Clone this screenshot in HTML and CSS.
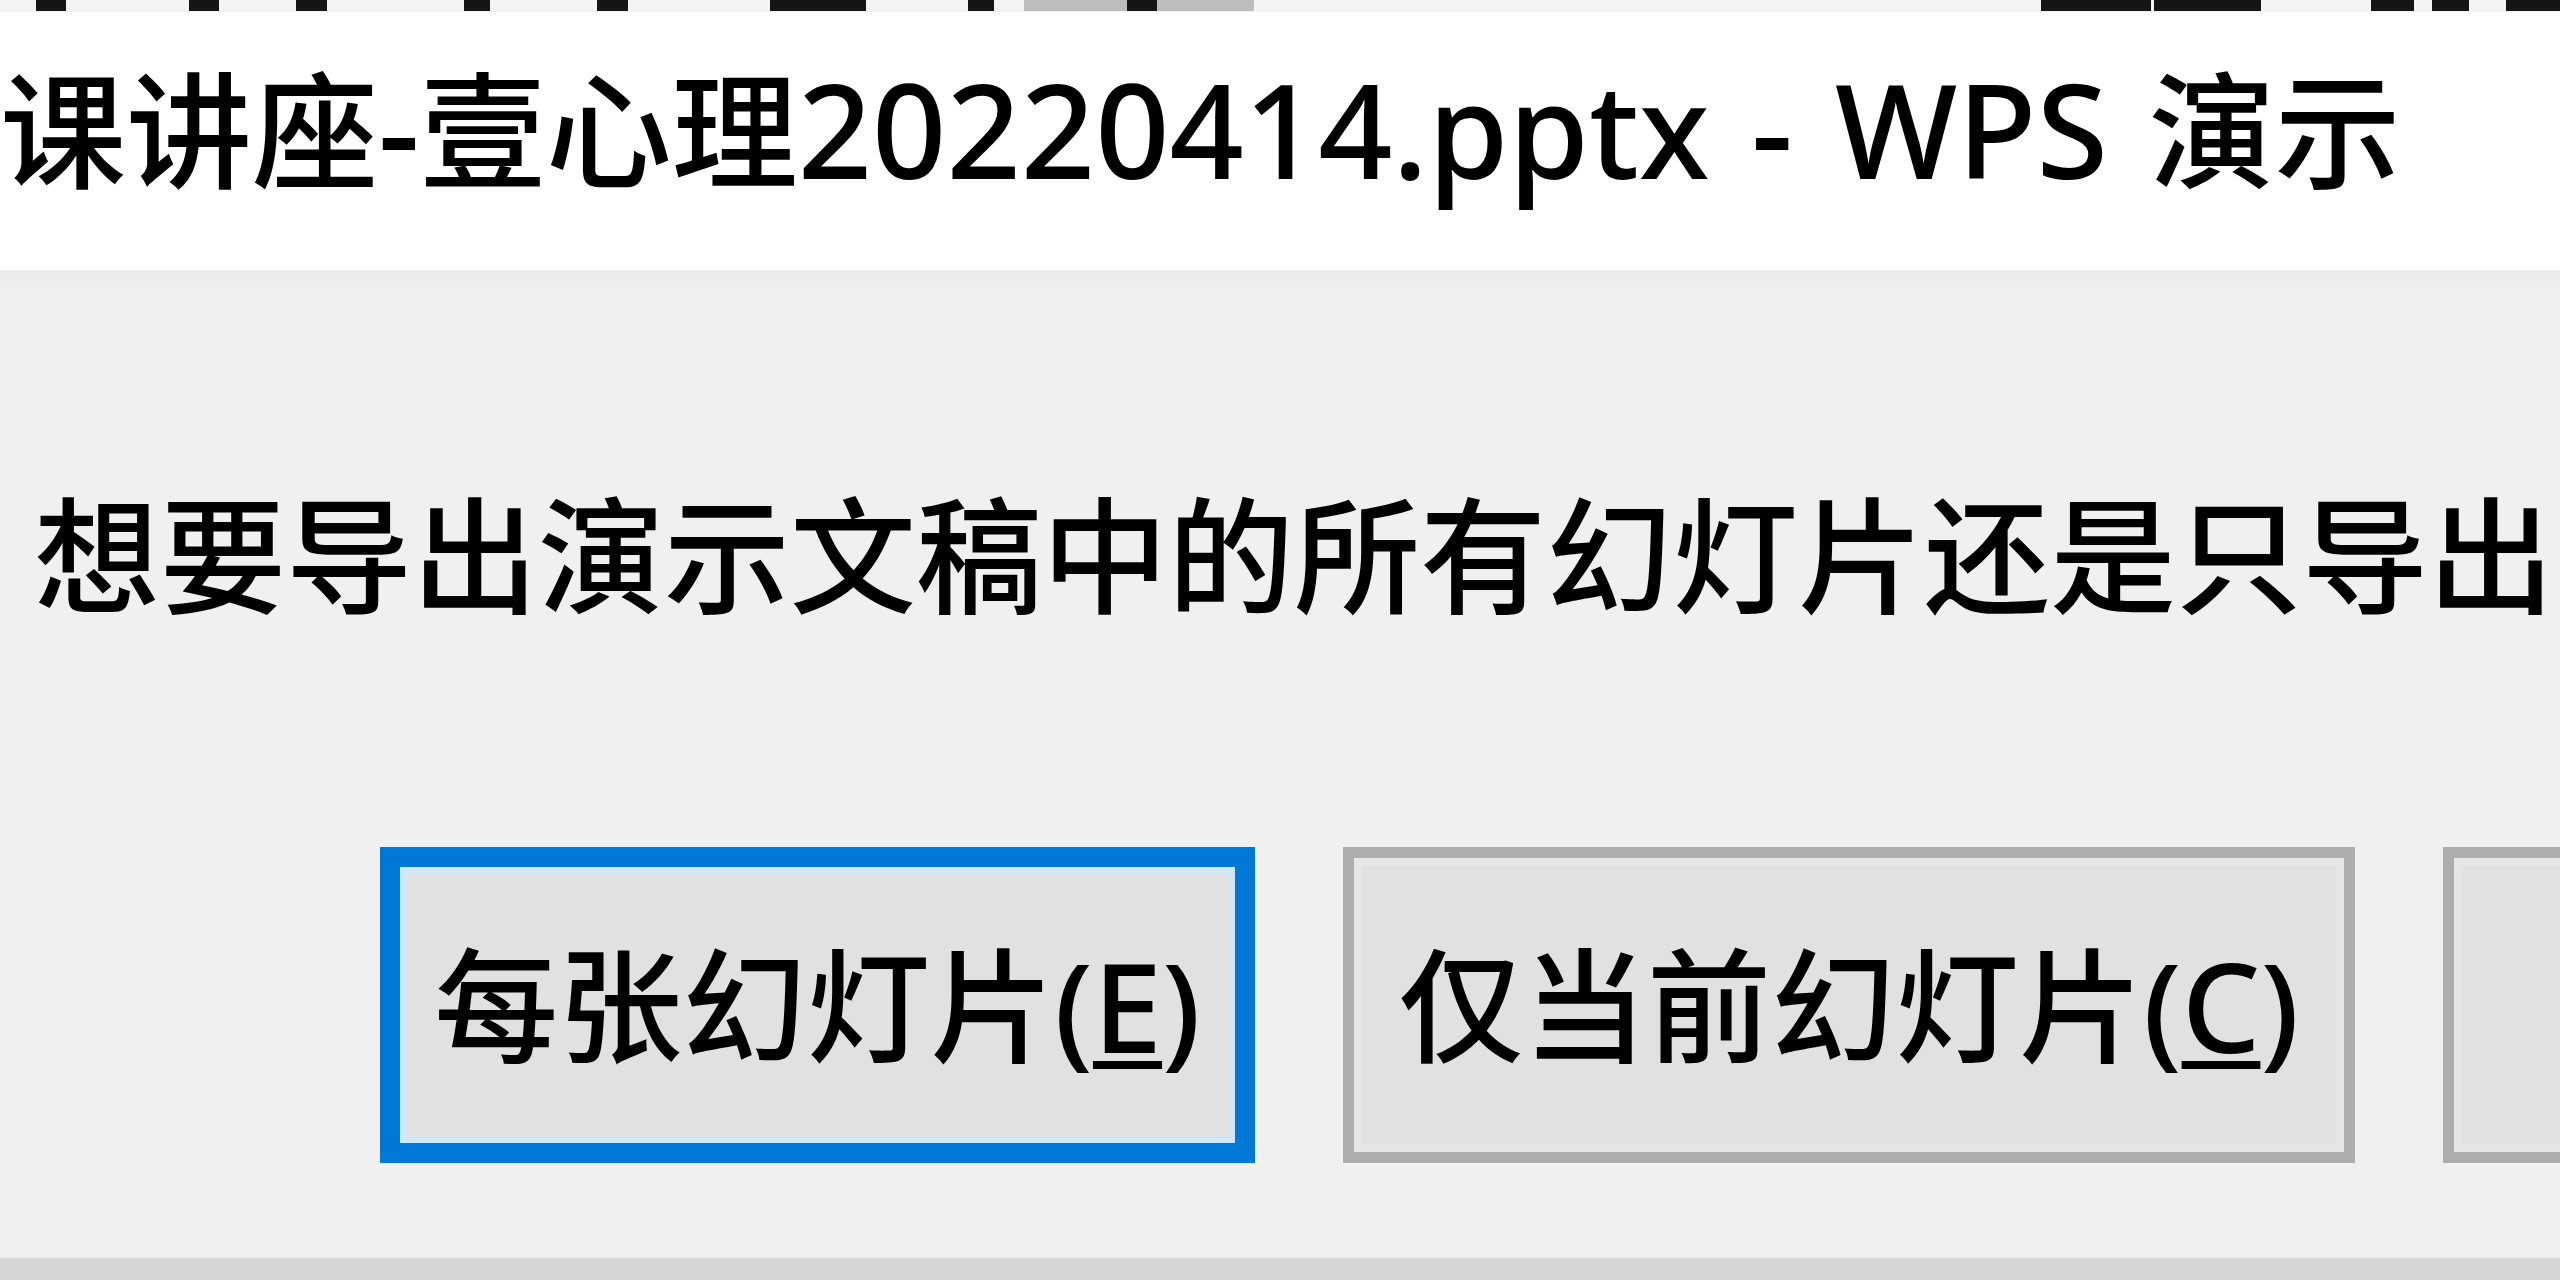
FILE: index.html
```html
<!DOCTYPE html>
<html lang="zh-CN">
<head>
<meta charset="utf-8">
<title>WPS 演示</title>
<link rel="stylesheet" href="styles.css">
</head>
<body>
<div class="page">
  <div class="strip">
    <span class="frag fa"></span>
    <span class="frag fb"></span>
    <span class="frag fc"></span>
    <span class="frag fd"></span>
    <span class="frag fe"></span>
    <span class="frag ff"></span>
    <span class="frag fg"></span>
    <span class="block"><span class="frag fh"></span></span>
    <span class="frag fi"></span>
    <span class="frag fj"></span>
    <span class="frag fk"></span>
    <span class="frag fl"></span>
    <span class="frag fm"></span>
  </div>
  <header class="titlebar">
    <div class="title">课讲座<span class="lat">-</span>壹心理<span class="lat">20220414.pptx - WPS</span> 演示</div>
  </header>
  <main class="dialog">
    <p class="message">想要导出演示文稿中的所有幻灯片还是只导出</p>
    <div class="buttons">
      <button class="btn btn-default" type="button">每张幻灯片(<u>E</u>)</button>
      <button class="btn" type="button">仅当前幻灯片(<u>C</u>)</button>
      <button class="btn" type="button" aria-label="取消"></button>
    </div>
  </main>
  <footer class="bottom"></footer>
</div>
</body>
</html>
```

FILE: styles.css
```css
html, body {
  margin: 0;
  padding: 0;
}

body {
  width: 2560px;
  height: 1280px;
  overflow: hidden;
  background: #f0f0f0;
  font-family: "Noto Sans", "Noto Sans CJK SC", sans-serif;
  font-weight: 500;
  color: #000;
}

.page {
  width: 2560px;
  height: 1280px;
  display: flex;
  flex-direction: column;
  overflow: hidden;
}

/* cut-off bottom of the line above */
.strip {
  height: 12px;
  flex: none;
  display: flex;
  align-items: stretch;
  background: #f4f4f4;
}

.frag {
  display: block;
  flex: none;
  background: #151515;
  height: 11px;
}

.fa { width: 30px; margin-left: 36px; }
.fb { width: 30px; margin-left: 123px; }
.fc { width: 31px; margin-left: 77px; }
.fd { width: 26px; margin-left: 137px; }
.fe { width: 31px; margin-left: 107px; }
.ff { width: 96px; margin-left: 142px; }
.fg { width: 26px; margin-left: 102px; }

.block {
  display: flex;
  flex: none;
  width: 230px;
  height: 11px;
  margin-left: 30px;
  background: #bdbdbd;
}

.fh { width: 30px; margin-left: 103px; }
.fi { width: 110px; margin-left: 787px; }
.fj { width: 107px; margin-left: 3px; }
.fk { width: 43px; margin-left: 110px; }
.fl { width: 37px; margin-left: 18px; }
.fm { width: 54px; margin-left: 37px; }

/* window title */
.titlebar {
  height: 258px;
  flex: none;
  box-sizing: border-box;
  background: #ffffff;
  padding-top: 54px;
}

.title {
  font-size: 126px;
  line-height: 126px;
  white-space: nowrap;
  word-spacing: 8px;
}

.lat {
  font-size: 130px;
}

/* dialog body */
.dialog {
  flex: 1;
  box-sizing: border-box;
  padding-top: 222px;
  background: linear-gradient(#eaeaea, #f0f0f0 22px);
}

.message {
  margin: 0;
  padding-left: 34px;
  font-size: 126px;
  line-height: 126px;
  white-space: nowrap;
}

.buttons {
  margin-top: 229px;
  padding-left: 380px;
  display: flex;
  gap: 88px;
}

.btn {
  flex: none;
  width: 1012px;
  height: 316px;
  box-sizing: border-box;
  margin: 0;
  padding: 0;
  display: flex;
  align-items: center;
  justify-content: center;
  border: 11px solid #adadad;
  background: #e1e1e1;
  box-shadow: inset 0 0 0 8px #e6e6e6;
  font-family: inherit;
  font-weight: 500;
  font-size: 124px;
  line-height: 1;
  color: #000;
  white-space: nowrap;
}

.btn-default {
  width: 875px;
  border: 20px solid #0078d7;
  box-shadow: inset 0 0 0 8px #d3e6f6;
}

.btn u {
  text-decoration-thickness: 8px;
  text-underline-offset: 8px;
}

.bottom {
  height: 23px;
  flex: none;
  background: #d6d6d6;
  border-top: 2px solid #e4e4e4;
  box-sizing: border-box;
}
```
